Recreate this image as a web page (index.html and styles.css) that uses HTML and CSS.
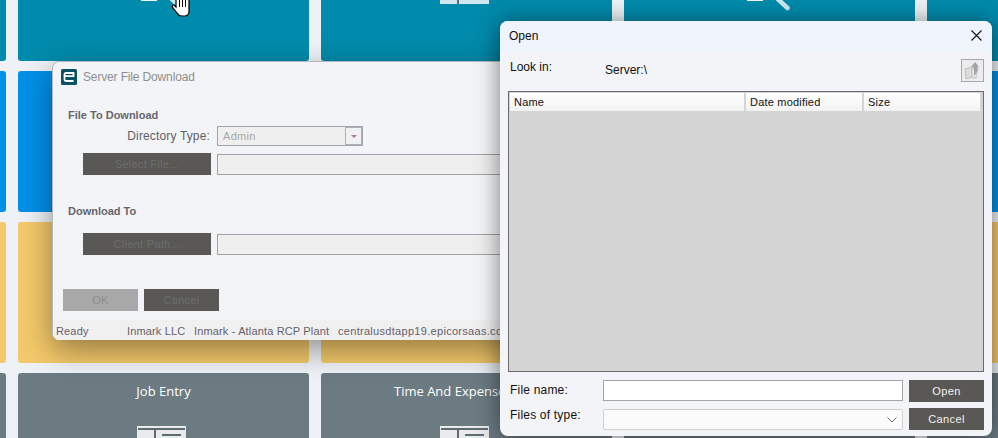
FILE: index.html
```html
<!DOCTYPE html>
<html lang="en">

<head>
    <meta charset="UTF-8">
    <title>Server File Download</title>
    <link rel="stylesheet" href="styles.css">
</head>

<body>

    <svg class="defs" width="0" height="0">
        <symbol id="form-icon" viewBox="0 0 49 31">
            <rect x="0" y="0" width="49" height="31" fill="currentColor" />
            <rect x="1" y="2" width="47" height="2" fill="#5f6b72" />
            <rect x="17" y="4" width="2" height="27" fill="#5f6b72" />
            <rect x="25" y="8" width="19" height="2" fill="#5f6b72" />
        </symbol>
        <symbol id="search-icon" viewBox="0 0 49 40">
            <rect x="4" y="0" width="16" height="28" fill="#f2f6f8" />
            <path d="M26 18 L44.5 35" stroke="#cfe8f0" stroke-width="4.5" stroke-linecap="round" />
        </symbol>
    </svg>

    <div class="desktop">

        <!-- tiles behind the windows -->
        <div class="tiles">
            <div class="tile teal"></div>
            <div class="tile teal">
                <svg class="tile-icon" width="49" height="40"><use href="#search-icon" /></svg>
            </div>
            <div class="tile teal">
                <svg class="tile-icon pale-blue" width="49" height="31"><use href="#form-icon" /></svg>
            </div>
            <div class="tile teal">
                <svg class="tile-icon" width="49" height="40"><use href="#search-icon" /></svg>
            </div>
            <div class="tile teal"></div>

            <div class="tile blue"></div>
            <div class="tile blue"></div>
            <div class="tile blue"></div>
            <div class="tile blue"></div>
            <div class="tile blue"></div>

            <div class="tile gold"></div>
            <div class="tile gold"></div>
            <div class="tile gold"></div>
            <div class="tile gold"></div>
            <div class="tile gold"></div>

            <div class="tile slate"></div>
            <div class="tile slate">
                <div class="tile-name">Job Entry</div>
                <svg class="tile-icon pale-grey" width="49" height="31"><use href="#form-icon" /></svg>
            </div>
            <div class="tile slate">
                <div class="tile-name cut">Time And Expense</div>
                <svg class="tile-icon pale-grey" width="49" height="31"><use href="#form-icon" /></svg>
            </div>
            <div class="tile slate"></div>
            <div class="tile slate"></div>
        </div>

        <!-- mouse pointer -->
        <svg class="pointer" width="20" height="17" viewBox="0 0 20 17">
            <path d="M4 -4 V7 L2 5 C0 4 0 7 1 8 L5 13 C6 15 8 16 10 16 H13 C16 16 17 13 17 11 V-4 Z" fill="#fff" stroke="#000" stroke-width="1.2" />
            <path d="M7.5 0 V7 M10.5 0 V7 M13.5 0 V7" stroke="#000" stroke-width="1" />
        </svg>

        <!-- Server File Download window -->
        <div class="window download">
            <div class="download-title">
                <svg class="logo" width="16" height="16" viewBox="0 0 16 16">
                    <rect width="16" height="16" rx="1.5" fill="#0b5063" />
                    <path d="M3.5 7.2 H12.5 V4 H5 Q3.5 4 3.5 5.5 V10.5 Q3.5 12 5 12 H12.5" fill="none" stroke="#fff" stroke-width="1.8" />
                </svg>
                <span>Server File Download</span>
            </div>
            <div class="download-body">
                <div class="group-label">File To Download</div>
                <div class="field-row first">
                    <label class="field-label">Directory Type:</label>
                    <div class="combo">
                        <span>Admin</span>
                        <span class="combo-arrow"></span>
                    </div>
                </div>
                <div class="field-row">
                    <button class="dark-btn path-btn">Select File...</button>
                    <div class="path-input"></div>
                </div>
                <div class="group-label second">Download To</div>
                <div class="field-row client">
                    <button class="dark-btn path-btn">Client Path...</button>
                    <div class="path-input"></div>
                </div>
                <div class="action-row">
                    <button class="dark-btn action-btn off">OK</button>
                    <button class="dark-btn action-btn">Cancel</button>
                </div>
            </div>
            <div class="status-bar">
                <span class="status-ready">Ready</span>
                <span class="status-company">Inmark LLC</span>
                <span class="status-plant">Inmark - Atlanta RCP Plant</span>
                <span class="status-server">centralusdtapp19.epicorsaas.com</span>
            </div>
        </div>

        <!-- Open window -->
        <div class="window open">
            <div class="open-title">
                <span>Open</span>
                <svg width="11" height="11" viewBox="0 0 11 11">
                    <path d="M0.5 0.5 L10.5 10.5 M10.5 0.5 L0.5 10.5" stroke="#111" stroke-width="1.1" />
                </svg>
            </div>
            <div class="open-body">
                <div class="look-row">
                    <span class="look-label">Look in:</span>
                    <span class="look-value">Server:\</span>
                    <div class="up-btn">
                        <svg width="17" height="19" viewBox="0 0 17 19">
                            <path d="M1 8 L8 6 V16 L2 18 Z" fill="#dcdcdc" stroke="#bdbdbd" />
                            <path d="M8 7 H14 L12 17 H8 Z" fill="#e6e6e6" stroke="#c4c4c4" />
                            <path d="M11 1 L15 6 H13.5 C13.5 10 12.5 13 10 15 C10.5 12 10 8 9.5 6 H7 Z" fill="#a3a3a3" />
                        </svg>
                    </div>
                </div>
                <div class="file-list">
                    <div class="list-head">
                        <span class="col-name">Name</span>
                        <span class="col-date">Date modified</span>
                        <span class="col-size">Size</span>
                    </div>
                </div>
                <div class="open-form">
                    <label class="open-label">File name:</label>
                    <div class="name-input"></div>
                    <button class="dark-btn open-btn">Open</button>
                    <label class="open-label type">Files of type:</label>
                    <div class="type-select">
                        <svg width="10" height="6" viewBox="0 0 10 6">
                            <path d="M0.5 0.5 L5 5 L9.5 0.5" fill="none" stroke="#666" stroke-width="1" />
                        </svg>
                    </div>
                    <button class="dark-btn open-btn">Cancel</button>
                </div>
            </div>
        </div>

    </div>

</body>

</html>
```

FILE: styles.css
```css
body {
    margin: 0;
    font-family: "Liberation Sans", Arial, sans-serif;
}

.defs {
    position: absolute;
}

.desktop {
    position: relative;
    width: 998px;
    height: 438px;
    overflow: hidden;
    background: #eef2f6;
}

/* tiles */
.tiles {
    display: grid;
    grid-template-columns: repeat(5, 291px);
    grid-auto-rows: 141px;
    gap: 10px 12px;
    margin: -80px 0 0 -285px;
}

.tile {
    border-radius: 3px;
    display: flex;
    flex-direction: column;
    align-items: center;
    padding-top: 53px;
    box-sizing: border-box;
    position: relative;
}

.teal {
    background: #008aab;
}

.blue {
    background: #0090e8;
}

.gold {
    background: #f4c96b;
}

.slate {
    background: #6c7a82;
}

.tile-name {
    position: absolute;
    top: 9px;
    left: 0;
    right: 0;
    text-align: center;
    color: #fff;
    font-family: "Open Sans", sans-serif;
    font-size: 13px;
    font-weight: 500;
    line-height: 18px;
}

.tile-name.cut {
    text-align: left;
    padding-left: 73px;
}

.tile-icon {
    margin-left: -5px;
    overflow: visible;
}

.pale-blue {
    color: #cfe8f0;
}

.pale-grey {
    color: #e8eaeb;
}

.pointer {
    position: absolute;
    left: 172px;
    top: 0;
    overflow: visible;
}

/* windows */
.window {
    position: absolute;
    box-sizing: border-box;
    display: flex;
    flex-direction: column;
    background: #f3f4f7;
    overflow: hidden;
}

.download {
    left: 52px;
    top: 61px;
    width: 500px;
    height: 279px;
    border: solid #b5b8bc;
    border-width: 1px 0 0 1px;
    border-radius: 7px 0 0 7px;
    box-shadow: 0 10px 30px rgba(0, 0, 0, 0.4);
    color: #5f5f68;
}

.download-title {
    display: flex;
    align-items: center;
    gap: 6px;
    height: 30px;
    padding-left: 8px;
    font-size: 12px;
    letter-spacing: -0.15px;
    color: #8f8f8f;
    flex-shrink: 0;
}

.download-body {
    flex: 1;
    padding: 17px 0 0 15px;
}

.group-label {
    font-size: 11px;
    font-weight: bold;
    line-height: 13px;
    color: #66666c;
}

.group-label.second {
    margin-top: 30px;
}

.field-row {
    display: flex;
    align-items: center;
    gap: 6px;
    margin-left: 15px;
    margin-top: 7px;
}

.field-row.first {
    margin-top: 4px;
}

.field-row.client {
    margin-top: 15px;
}

.field-label {
    width: 127px;
    margin-right: 1px;
    flex-shrink: 0;
    text-align: right;
    font-size: 12px;
    letter-spacing: 0.15px;
}

.combo {
    width: 146px;
    height: 20px;
    box-sizing: border-box;
    border: 1px solid #a4a4a8;
    background: #efefef;
    display: flex;
    justify-content: space-between;
    align-items: center;
    padding-left: 5px;
    font-size: 11px;
    letter-spacing: 0.3px;
    color: #a6a6a6;
}

.combo-arrow {
    width: 17px;
    height: 18px;
    box-sizing: border-box;
    border: 1px solid #a9aec4;
    background: #f1f1f1;
    display: flex;
    align-items: center;
    justify-content: center;
}

.combo-arrow::after {
    content: "";
    border: 3px solid transparent;
    border-top: 3px solid #a87f95;
    margin-top: 3px;
}

.dark-btn {
    border: 0;
    padding: 0;
    background: #5a5855;
    color: #6d6d6d;
    font-family: inherit;
    font-size: 11px;
    letter-spacing: 0.3px;
}

.path-btn {
    width: 128px;
    height: 22px;
    flex-shrink: 0;
}

.path-input {
    flex: 1;
    height: 21px;
    box-sizing: border-box;
    border: 1px solid #a2a2a6;
    background: #efefef;
}

.action-row {
    display: flex;
    gap: 6px;
    margin: 34px 0 0 -5px;
}

.action-btn {
    width: 75px;
    height: 22px;
}

.action-btn.off {
    background: #a8a8a8;
    color: #8c8c8c;
}

.status-bar {
    display: flex;
    align-items: center;
    height: 20px;
    flex-shrink: 0;
    padding: 2px 0 0 3px;
    box-sizing: border-box;
    background: #f0f0f1;
    font-size: 11px;
    letter-spacing: 0.15px;
    white-space: nowrap;
    color: #66606c;
}

.status-ready {
    width: 71px;
}

.status-company {
    width: 67px;
}

.status-plant {
    width: 144px;
}

.status-server {
    letter-spacing: 0.3px;
}

.open {
    left: 500px;
    top: 21px;
    width: 492px;
    height: 415px;
    border-radius: 8px;
    box-shadow: 0 2px 24px rgba(0, 0, 0, 0.5);
    color: #111;
}

.open-title {
    display: flex;
    justify-content: space-between;
    align-items: center;
    height: 31px;
    padding: 0 10px 2px 9px;
    box-sizing: border-box;
    background: #eff3fb;
    font-size: 12px;
    flex-shrink: 0;
}

.open-body {
    flex: 1;
    display: flex;
    flex-direction: column;
    padding: 7px 8px 0 8px;
}

.look-row {
    display: flex;
    height: 23px;
    font-size: 12px;
    flex-shrink: 0;
}

.look-label {
    width: 97px;
    padding: 1px 0 0 2px;
    box-sizing: border-box;
    line-height: 14px;
}

.look-value {
    flex: 1;
    padding-top: 4px;
    line-height: 14px;
}

.up-btn {
    width: 23px;
    height: 23px;
    box-sizing: border-box;
    border: 1px solid #a9a9a9;
    background: #ececee;
    display: flex;
    align-items: center;
    justify-content: center;
}

.file-list {
    height: 281px;
    margin-top: 9px;
    box-sizing: border-box;
    border: 1px solid #696969;
    background: #d4d4d4;
    padding: 1px 3px 0 1px;
    flex-shrink: 0;
}

.list-head {
    display: grid;
    grid-template-columns: 234px 116px 1fr;
    gap: 2px;
    height: 18px;
    font-size: 11px;
    letter-spacing: 0.2px;
    line-height: 18px;
}

.list-head span {
    padding-left: 4px;
    background: linear-gradient(#ffffff, #f2f2f2);
}

.open-form {
    display: grid;
    grid-template-columns: 87px 300px 75px;
    grid-auto-rows: 22px;
    column-gap: 6px;
    row-gap: 6px;
    align-items: start;
    margin: 8px 0 0 2px;
}

.open-label {
    font-size: 12px;
    line-height: 20px;
    letter-spacing: 0.2px;
}

.open-label.type {
    line-height: 14px;
}

.name-input {
    height: 21px;
    box-sizing: border-box;
    border: 1px solid #a4a4a4;
    background: #fff;
}

.type-select {
    height: 21px;
    margin-top: 1px;
    box-sizing: border-box;
    border: 1px solid #cfcfcf;
    border-radius: 2px;
    background: #fbfbfb;
    display: flex;
    align-items: center;
    justify-content: flex-end;
    padding-right: 5px;
}

.open-btn {
    height: 22px;
    color: #f2f2f2;
    letter-spacing: 0.4px;
}
```
